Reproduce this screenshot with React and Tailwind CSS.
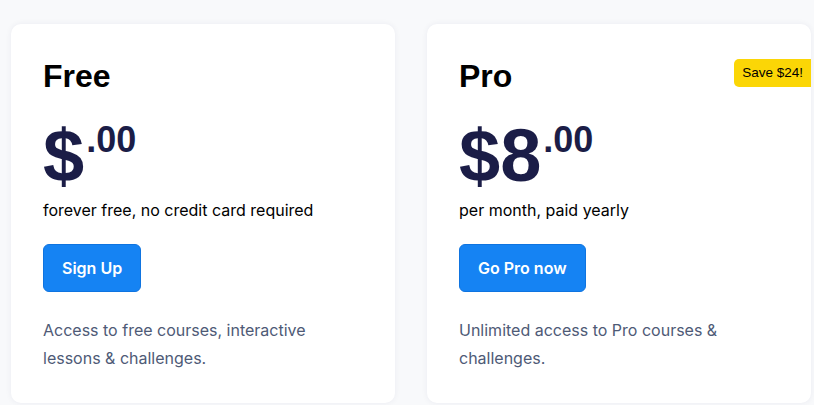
import React from 'react';

const plans = [
  {
    name: 'Free',
    whole: '',
    note: 'forever free, no credit card required',
    cta: 'Sign Up',
    blurb: 'Access to free courses, interactive lessons & challenges.',
  },
  {
    name: 'Pro',
    whole: '8',
    note: 'per month, paid yearly',
    cta: 'Go Pro now',
    blurb: 'Unlimited access to Pro courses & challenges.',
    badge: 'Save $24!',
  },
];

const PlanCard = ({ plan }) => (
  <div className="relative w-[384px] h-[379px] bg-white rounded-[10px] shadow-[0_0_6px_rgba(30,40,90,0.06)] px-8 pt-8 pb-8">
    {plan.badge && (
      <span className="absolute right-0 top-[35px] h-[28px] px-[8px] flex items-center bg-[#fbd606] text-black text-[13.5px] rounded-l-[5px] font-['Liberation_Sans',sans-serif]">
        {plan.badge}
      </span>
    )}
    <h2 className="text-[32px] leading-[40px] font-bold text-black font-['Liberation_Sans',sans-serif]">
      {plan.name}
    </h2>
    <div className="mt-6 flex items-start text-[#1b1d47] font-bold font-['Liberation_Sans',sans-serif]">
      <span className="text-[74px] leading-[72px]">${plan.whole}</span>
      <span className="ml-[2px] text-[36px] leading-[34px] mt-[3px]">.00</span>
    </div>
    <p className="mt-[6px] text-[16px] leading-[24px] text-black font-['Inter',sans-serif]">{plan.note}</p>
    <button className="mt-[22px] h-[48px] px-[18px] rounded-[6px] bg-[#1583f3] border border-[#0f74e0] text-white text-[16px] font-semibold font-['Inter',sans-serif]">
      {plan.cta}
    </button>
    <p className="mt-6 text-[16px] leading-[28px] text-[#4e5a76] font-['Inter',sans-serif]">{plan.blurb}</p>
  </div>
);

export default function App() {
  return (
    <div className="w-full h-[405px] bg-[#f8f9fb] overflow-hidden">
      <div className="flex gap-8 pl-[11px] pt-6">
        {plans.map((p) => (
          <PlanCard key={p.name} plan={p} />
        ))}
      </div>
    </div>
  );
}
